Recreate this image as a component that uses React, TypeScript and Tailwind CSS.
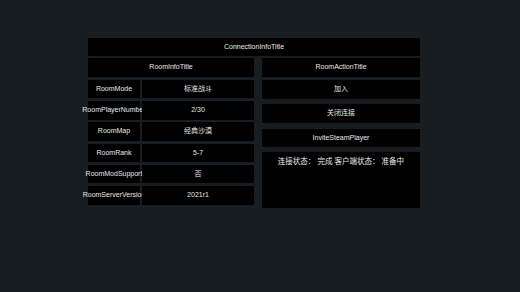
import React from 'react';

const font = { fontFamily: '"Liberation Sans", "Noto Sans CJK SC", sans-serif' };

const rows: [string, string][] = [
  ['RoomMode', '标准战斗'],
  ['RoomPlayerNumber', '2/30'],
  ['RoomMap', '经典沙漠'],
  ['RoomRank', '5-7'],
  ['RoomModSupport', '否'],
  ['RoomServerVersion', '2021r1'],
];

function Box({ children, className = '' }: { children: React.ReactNode; className?: string }) {
  return (
    <div className={`bg-black flex items-center justify-center whitespace-nowrap text-[7px] text-[#e8e8e8] ${className}`}>
      {children}
    </div>
  );
}

export default function App() {
  return (
    <div className="w-[520px] h-[292px] bg-[#171d20] pt-[38px] pl-[88px]" style={font}>
      <div className="w-[332px] flex flex-col gap-[2px]">
        <Box className="h-[18px]">ConnectionInfoTitle</Box>
        <div className="flex gap-[8px]">
          {/* room info */}
          <div className="w-[166px] flex flex-col gap-[2.8px]">
            <Box className="h-[19px]">RoomInfoTitle</Box>
            {rows.map(([k, v]) => (
              <div key={k} className="h-[18.5px] flex gap-[2px]">
                <Box className="w-[52px] h-full">{k}</Box>
                <Box className="relative flex-1 h-full text-[7.5px]">{v}</Box>
              </div>
            ))}
          </div>
          {/* actions */}
          <div className="w-[158px] flex flex-col">
            <Box className="h-[19px]">RoomActionTitle</Box>
            <Box className="h-[19px] mt-[3px] text-[7.5px]">加入</Box>
            <Box className="h-[19px] mt-[5px] text-[7.5px]">关闭连接</Box>
            <Box className="h-[18px] mt-[6px]">InviteSteamPlayer</Box>
            <div className="h-[56px] mt-[5px] bg-black pt-[4px] text-center whitespace-nowrap text-[7.5px] text-[#e8e8e8]">
              连接状态：&nbsp;完成 客户端状态：&nbsp;准备中
            </div>
          </div>
        </div>
      </div>
    </div>
  );
}
